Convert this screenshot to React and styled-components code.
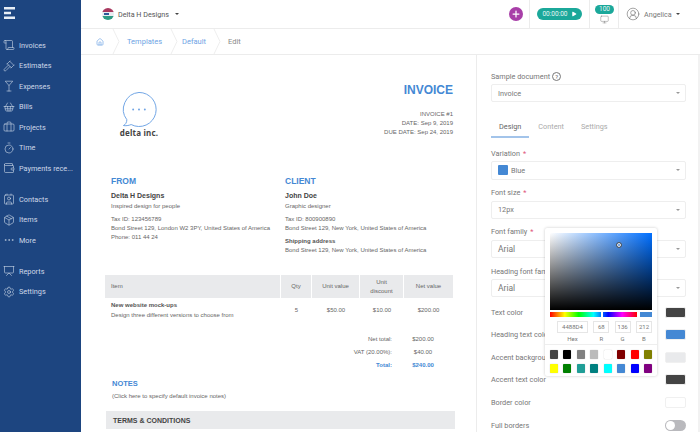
import React from 'react';
import styled, { createGlobalStyle } from 'styled-components';
import {
  Scroll, Gavel, Martini, ShoppingBasket, Briefcase, Timer, Wallet, Contact, Package,
  Ellipsis, Presentation, Settings, House, Plus, Play, Monitor, CircleUserRound,
} from 'lucide-react';

const GlobalStyle = createGlobalStyle`
  html, body { margin: 0; padding: 0; background: #fff; }
  body { font-family: Roboto, "Liberation Sans", sans-serif; overflow: hidden; }
  * { box-sizing: border-box; }
`;

const Shell = styled.div`
  position: relative;
  display: flex;
  width: 700px;
  height: 432px;
  overflow: hidden;
`;

const Sidebar = styled.nav`
  width: 81px;
  flex: none;
  background: #1d4580;
  color: #cdd8e8;
  padding-top: 7px;
`;

const Brand = styled.svg`
  display: block;
  width: 11px;
  height: 12px;
  margin: 0 0 16px 4px;
`;

const NavGroup = styled.div`
  margin-bottom: 10.5px;
`;

const NavItem = styled.div`
  display: flex;
  align-items: center;
  height: 20.5px;
  padding-left: 3px;
  gap: 4px;
  font-size: 7.3px;
  white-space: nowrap;
  svg { width: 12px; height: 12px; flex: none; }
`;

const Main = styled.div`
  flex: 1;
  display: flex;
  flex-direction: column;
  min-width: 0;
`;

const Topbar = styled.header`
  display: flex;
  align-items: stretch;
  height: 29px;
  flex: none;
  border-bottom: 1px solid #ececec;
`;

const OrgSwitch = styled.div`
  flex: 1;
  display: flex;
  align-items: center;
  padding-left: 21px;
  gap: 4px;
  font-size: 7.2px;
  color: #555;
`;

const Caret = styled.span`
  width: 0;
  height: 0;
  margin-left: ${({ $gap }) => $gap || 0}px;
  border-left: 2.5px solid transparent;
  border-right: 2.5px solid transparent;
  border-top: 2.5px solid #444;
`;

const TopCell = styled.div`
  display: flex;
  align-items: center;
  justify-content: center;
  position: relative;
  width: ${({ $w }) => $w}px;
  border-right: 1px solid #ececec;
`;

const PlusButton = styled.div`
  width: 14px;
  height: 14px;
  margin-left: 2px;
  border-radius: 50%;
  background: #a83fa8;
  color: #fff;
  display: flex;
  align-items: center;
  justify-content: center;
`;

const TimerPill = styled.div`
  display: flex;
  align-items: center;
  justify-content: center;
  gap: 3px;
  width: 45px;
  height: 12px;
  border-radius: 6px;
  background: #1ba89a;
  color: #e6f7f5;
  font-size: 6.5px;
`;

const TrayIcon = styled(Monitor)`
  margin-top: 10px;
  color: #777;
`;

const Badge = styled.span`
  position: absolute;
  top: 5px;
  left: 5px;
  width: 19px;
  height: 9px;
  border-radius: 5px;
  background: #1ba89a;
  color: #e6f7f5;
  font-size: 6.5px;
  line-height: 9px;
  text-align: center;
`;

const UserMenu = styled.div`
  width: 81px;
  flex: none;
  display: flex;
  align-items: center;
  padding-left: 7px;
  gap: 4px;
  font-size: 7.2px;
  color: #777;
`;

const Crumbs = styled.div`
  display: flex;
  align-items: center;
  height: 26px;
  flex: none;
  border-bottom: 1px solid #ececec;
  font-size: 7.5px;
`;

const Crumb = styled.span`
  display: flex;
  align-items: center;
  height: 100%;
  flex: none;
  width: ${({ $w }) => $w}px;
  color: ${({ $muted }) => ($muted ? '#888' : '#6ea3e4')};
  padding-left: ${({ $pad }) => $pad}px;
  svg { flex: none; }
`;

const CrumbArrow = styled.svg`
  width: 8px;
  height: 25px;
  margin-left: ${({ $gap }) => $gap}px;
`;

const Content = styled.div`
  flex: 1;
  display: flex;
  min-height: 0;
`;

const Doc = styled.section`
  width: 396px;
  flex: none;
  padding: 27px 0 0 24px;
  border-right: 1px solid #ececec;
  font-family: "Liberation Sans", Arial, sans-serif;
  font-size: 6px;
  color: #666;
`;

const DocHead = styled.div`
  display: flex;
  justify-content: space-between;
  width: 348px;
  height: 94px;
  padding-left: 14px;
`;

const Logo = styled.div`
  display: flex;
  flex-direction: column;
  align-items: center;
  width: 40px;
  padding-top: 9px;
  font-family: "Noto Sans", sans-serif;
  font-weight: 700;
  font-size: 8px;
  letter-spacing: 0.2px;
  line-height: 9px;
  color: #444;
  white-space: nowrap;
  svg { display: block; margin-bottom: 1px; }
`;

const InvoiceMeta = styled.div`
  text-align: right;
  line-height: 9px;
`;

const InvoiceTitle = styled.div`
  font-size: 12px;
  font-weight: 700;
  line-height: 16px;
  color: #4488d4;
  margin-bottom: 12px;
`;

const Parties = styled.div`
  display: grid;
  grid-template-columns: 174px 1fr;
  padding-left: 6px;
  height: 99px;
  line-height: 9px;
`;

const SectionTitle = styled.div`
  font-size: ${({ $size }) => $size || 8.5}px;
  font-weight: 700;
  line-height: 10px;
  color: #4488d4;
  margin-bottom: ${({ $mb }) => $mb ?? 5}px;
`;

const PartyName = styled.div`
  font-size: 7px;
  font-weight: 700;
  line-height: 10px;
  color: #444;
  margin-bottom: 1px;
`;

const Gap = styled.div`
  height: ${({ $h }) => $h}px;
`;

const Strong = styled.div`
  font-weight: 700;
  color: #555;
`;

const TableRow = styled.div`
  display: grid;
  grid-template-columns: 176px 31px 48px 44px 49px;
  align-items: center;
  margin-top: ${({ $mt }) => $mt || 0}px;
`;

const HeadCell = styled.div`
  height: 23px;
  display: flex;
  align-items: center;
  justify-content: ${({ $left }) => ($left ? 'flex-start' : 'center')};
  text-align: center;
  background: #e9eaec;
  border-right: ${({ $last }) => ($last ? 'none' : '1px solid #fff')};
  padding-left: ${({ $left }) => ($left ? 6 : 0)}px;
  line-height: 8.5px;
`;

const BodyCell = styled.div`
  text-align: ${({ $left }) => ($left ? 'left' : 'center')};
  padding-left: ${({ $left }) => ($left ? 6 : 0)}px;
  line-height: 10px;
`;

const Totals = styled.div`
  margin-top: 13px;
  display: grid;
  grid-template-columns: 287px 30px;
  column-gap: 16px;
  line-height: 13px;
`;

const TotalLabel = styled.div`
  text-align: right;
  color: ${({ $accent }) => ($accent ? '#4488d4' : '#666')};
  font-weight: ${({ $accent }) => ($accent ? 700 : 400)};
`;

const TotalValue = styled.div`
  text-align: center;
  color: ${({ $accent }) => ($accent ? '#4488d4' : '#666')};
  font-weight: ${({ $accent }) => ($accent ? 700 : 400)};
`;

const Notes = styled.div`
  padding-left: 7px;
  margin-top: 7px;
`;

const Terms = styled.div`
  width: 349px;
  height: 18px;
  margin: 12px 0 0 1px;
  padding-left: 7px;
  display: flex;
  align-items: center;
  background: #e9eaec;
  color: #444;
  font-size: 7px;
  font-weight: 700;
`;

const Panel = styled.aside`
  flex: 1;
  min-width: 0;
  padding: 16px 0 0 14px;
  border-right: 2px solid #f2f2f2;
  color: #777;
  font-size: 7.3px;
`;

const FieldLabel = styled.div`
  display: flex;
  align-items: center;
  gap: 2px;
  height: 10px;
  margin-bottom: 3px;
  white-space: nowrap;
`;

const Required = styled.span`
  color: #e0557a;
  margin-left: 1px;
`;

const HelpMark = styled.span`
  width: 9px;
  height: 9px;
  border: 1px solid #777;
  border-radius: 50%;
  font-size: 6px;
  line-height: 7px;
  text-align: center;
  color: #666;
`;

const Select = styled.div`
  display: flex;
  align-items: center;
  gap: 3px;
  width: 195px;
  height: 18.3px;
  margin-bottom: ${({ $mb }) => $mb ?? 8}px;
  padding: 0 5px 0 6px;
  border: 1px solid #eee;
  border-radius: 2px;
  color: #777;
  font-size: ${({ $large }) => ($large ? 8.5 : 7.3)}px;
`;

const SelectCaret = styled.span`
  width: 0;
  height: 0;
  margin-left: auto;
  border-left: 2px solid transparent;
  border-right: 2px solid transparent;
  border-top: 2px solid #999;
`;

const ColorDot = styled.span`
  width: 10px;
  height: 10px;
  border-radius: 1px;
  background: #4488d4;
`;

const Tabs = styled.div`
  display: flex;
  gap: 17px;
  height: 21px;
  margin-bottom: 10px;
  padding-left: 8px;
`;

const Tab = styled.div`
  position: relative;
  line-height: 19px;
  color: ${({ $active }) => ($active ? '#666' : '#aaa')};
  &::after {
    content: '';
    display: ${({ $active }) => ($active ? 'block' : 'none')};
    position: absolute;
    left: -8px;
    right: -8px;
    bottom: 0;
    height: 2px;
    background: #a3c4ea;
  }
`;

const ColorRow = styled.div`
  display: flex;
  align-items: center;
  justify-content: space-between;
  width: 195px;
  height: 22.6px;
  white-space: nowrap;
`;

const Swatch = styled.span`
  width: 21px;
  height: 11px;
  border: 1px solid #f0f0f0;
  border-radius: 2px;
  background: ${({ $c }) => $c};
`;

const Toggle = styled.span`
  position: relative;
  width: 21px;
  height: 11px;
  border-radius: 6px;
  background: #b9b9bd;
  &::after {
    content: '';
    position: absolute;
    top: 1px;
    left: 1px;
    width: 9px;
    height: 9px;
    border-radius: 50%;
    background: #fff;
  }
`;

const Picker = styled.div`
  position: absolute;
  left: 545px;
  top: 228px;
  width: 112px;
  height: 148px;
  padding: 5px;
  background: #fff;
  border-radius: 2px;
  box-shadow: 0 0 3px rgba(0, 0, 0, 0.22);
  color: #777;
  font-size: 6px;
`;

const Saturation = styled.div`
  position: relative;
  height: 77px;
  background: linear-gradient(to top, #000, transparent), linear-gradient(to right, #fff, #006fff);
`;

const Thumb = styled.span`
  position: absolute;
  left: 67px;
  top: 10px;
  width: 4px;
  height: 4px;
  border: 1px solid #fff;
  outline: 0.5px solid #555;
  border-radius: 50%;
`;

const HueRow = styled.div`
  display: flex;
  justify-content: space-between;
  margin-top: 2px;
`;

const Hue = styled.div`
  position: relative;
  width: 87px;
  height: 5px;
  background: linear-gradient(to right, #f00, #ff0 17%, #0f0 33%, #0ff 50%, #00f 67%, #f0f 83%, #f00);
`;

const HueThumb = styled.span`
  position: absolute;
  left: 51px;
  top: 0;
  width: 2px;
  height: 5px;
  background: #fff;
`;

const Preview = styled.div`
  width: 12px;
  height: 5px;
  background: #4488d4;
`;

const Inputs = styled.div`
  display: grid;
  grid-template-columns: 31px 16px 16px 16px;
  justify-content: space-between;
  margin: 4px 0 2px;
  padding-left: 7px;
  text-align: center;
`;

const InputBox = styled.div`
  height: 12px;
  border: 1px solid #e6e6e6;
  line-height: 10px;
`;

const InputLabel = styled.div`
  margin-top: 1.5px;
  line-height: 7px;
`;

const Palette = styled.div`
  display: grid;
  grid-template-columns: repeat(8, 8px);
  justify-content: space-between;
  row-gap: 5px;
  margin: 0 -5px;
  padding: 5px 5px 0;
  border-top: 1px solid #eee;
`;

const Chip = styled.span`
  height: 9px;
  border-radius: 1px;
  box-shadow: 0 0 1px rgba(0, 0, 0, 0.35);
  background: ${({ $c }) => $c};
`;

const mainNav = [
  [Scroll, 'Invoices'], [Gavel, 'Estimates'], [Martini, 'Expenses'], [ShoppingBasket, 'Bills'],
  [Briefcase, 'Projects'], [Timer, 'Time'], [Wallet, 'Payments rece...'],
];
const peopleNav = [[Contact, 'Contacts'], [Package, 'Items'], [Ellipsis, 'More']];
const bottomNav = [[Presentation, 'Reports'], [Settings, 'Settings']];

const chips = ['#444', '#000', '#808080', '#bbb', '#fff', '#800000', '#f00', '#808000',
  '#ff0', '#008000', '#1f9e97', '#008080', '#0ff', '#4488d4', '#00f', '#800080'];

const NavList = ({ items }) => (
  <NavGroup>
    {items.map(([Icon, label]) => (
      <NavItem key={label}><Icon strokeWidth={1.2} />{label}</NavItem>
    ))}
  </NavGroup>
);

const Arrow = ({ gap }) => (
  <CrumbArrow $gap={gap} viewBox="0 0 8 25">
    <path d="M1 0l6 12.5L1 25" fill="none" stroke="#eee" />
  </CrumbArrow>
);

const App = () => (
  <Shell>
    <GlobalStyle />
    <Sidebar>
      <Brand viewBox="0 0 11 12">
        <path d="M0 0h11v2.400H0zM0 4.800h7v2.400H0zM0 9.600h11V12H0z" fill="#e8eef6" />
      </Brand>
      <NavList items={mainNav} />
      <NavList items={peopleNav} />
      <NavList items={bottomNav} />
    </Sidebar>
    <Main>
      <Topbar>
        <OrgSwitch>
          <svg width="12" height="12" viewBox="0 0 12 12">
            <clipPath id="org"><circle cx="6" cy="6" r="6" /></clipPath>
            <g clipPath="url(#org)">
              <rect width="12" height="4" fill="#a8385f" />
              <rect y="4" width="12" height="4" fill="#e9edf2" />
              <rect x="2" y="5" width="5" height="2" fill="#2d5a9a" />
              <rect y="8" width="12" height="4" fill="#2f9b85" />
            </g>
          </svg>
          Delta H Designs
          <Caret $gap={2} />
        </OrgSwitch>
        <TopCell $w={30}>
          <PlusButton><Plus size={10} strokeWidth={3} /></PlusButton>
        </TopCell>
        <TopCell $w={60}>
          <TimerPill>00:00:00<Play size={6} fill="#fff" strokeWidth={0} /></TimerPill>
        </TopCell>
        <TopCell $w={29}>
          <TrayIcon size={9} strokeWidth={1.2} />
          <Badge>100</Badge>
        </TopCell>
        <UserMenu>
          <CircleUserRound size={14} color="#666" strokeWidth={1} />
          Angelica
          <Caret />
        </UserMenu>
      </Topbar>
      <Crumbs>
        <Crumb $w={39} $pad={15}>
          <House size={8} />
          <Arrow gap={8} />
        </Crumb>
        <Crumb $w={56} $pad={7}>
          Templates
          <Arrow gap={8} />
        </Crumb>
        <Crumb $w={45} $pad={6}>
          Default
          <Arrow gap={7} />
        </Crumb>
        <Crumb $w={40} $pad={7} $muted>Edit</Crumb>
      </Crumbs>
      <Content>
        <Doc>
          <DocHead>
            <Logo>
              <svg width="38" height="36" viewBox="0 0 38 37">
                <path d="M19 1.500a17.500 17.500 0 1 1-8 33c-2.500 1-6 1.500-8 1 2-1 3.500-3 3.500-6A17.500 17.500 0 0 1 19 1.500z" fill="none" stroke="#6ea3e4" strokeWidth="1" />
                <circle cx="13" cy="19" r="1" fill="#6ea3e4" />
                <circle cx="19" cy="19" r="1" fill="#6ea3e4" />
                <circle cx="25" cy="19" r="1" fill="#6ea3e4" />
              </svg>
              delta inc.
            </Logo>
            <InvoiceMeta>
              <InvoiceTitle>INVOICE</InvoiceTitle>
              <div>INVOICE #1</div>
              <div>DATE: Sep 9, 2019</div>
              <div>DUE DATE: Sep 24, 2019</div>
            </InvoiceMeta>
          </DocHead>
          <Parties>
            <div>
              <SectionTitle>FROM</SectionTitle>
              <PartyName>Delta H Designs</PartyName>
              <div>Inspired design for people</div>
              <Gap $h={4} />
              <div>Tax ID: 123456789</div>
              <div>Bond Street 129, London W2 3PY, United States of America</div>
              <div>Phone: 011 44 24</div>
            </div>
            <div>
              <SectionTitle>CLIENT</SectionTitle>
              <PartyName>John Doe</PartyName>
              <div>Graphic designer</div>
              <Gap $h={4} />
              <div>Tax ID: 800900890</div>
              <div>Bond Street 129, New York, United States of America</div>
              <Gap $h={4} />
              <Strong>Shipping address</Strong>
              <div>Bond Street 129, New York, United States of America</div>
            </div>
          </Parties>
          <TableRow>
            <HeadCell $left>Item</HeadCell>
            <HeadCell>Qty</HeadCell>
            <HeadCell>Unit value</HeadCell>
            <HeadCell>Unit<br />discount</HeadCell>
            <HeadCell $last>Net value</HeadCell>
          </TableRow>
          <TableRow $mt={2}>
            <BodyCell $left>
              <Strong>New website mock-ups</Strong>
              Design three different versions to choose from
            </BodyCell>
            <BodyCell>5</BodyCell>
            <BodyCell>$50.00</BodyCell>
            <BodyCell>$10.00</BodyCell>
            <BodyCell>$200.00</BodyCell>
          </TableRow>
          <Totals>
            <TotalLabel>Net total:</TotalLabel><TotalValue>$200.00</TotalValue>
            <TotalLabel>VAT (20.00%):</TotalLabel><TotalValue>$40.00</TotalValue>
            <TotalLabel $accent>Total:</TotalLabel><TotalValue $accent>$240.00</TotalValue>
          </Totals>
          <Notes>
            <SectionTitle $size={7.5} $mb={4}>NOTES</SectionTitle>
            <div>(Click here to specify default invoice notes)</div>
          </Notes>
          <Terms>TERMS &amp; CONDITIONS</Terms>
        </Doc>
        <Panel>
          <FieldLabel>Sample document <HelpMark>?</HelpMark></FieldLabel>
          <Select $mb={15}>Invoice<SelectCaret /></Select>
          <Tabs>
            <Tab $active>Design</Tab>
            <Tab>Content</Tab>
            <Tab>Settings</Tab>
          </Tabs>
          <FieldLabel>Variation <Required>*</Required></FieldLabel>
          <Select><ColorDot />Blue<SelectCaret /></Select>
          <FieldLabel>Font size <Required>*</Required></FieldLabel>
          <Select>12px<SelectCaret /></Select>
          <FieldLabel>Font family <Required>*</Required></FieldLabel>
          <Select $large>Arial<SelectCaret /></Select>
          <FieldLabel>Heading font family</FieldLabel>
          <Select $large $mb={3.4}>Arial<SelectCaret /></Select>
          <ColorRow>Text color<Swatch $c="#444" /></ColorRow>
          <ColorRow>Heading text color<Swatch $c="#4488d4" /></ColorRow>
          <ColorRow>Accent background<Swatch $c="#e9eaec" /></ColorRow>
          <ColorRow>Accent text color<Swatch $c="#444" /></ColorRow>
          <ColorRow>Border color<Swatch $c="#fff" /></ColorRow>
          <ColorRow>Full borders<Toggle /></ColorRow>
        </Panel>
      </Content>
    </Main>
    <Picker>
      <Saturation><Thumb /></Saturation>
      <HueRow><Hue><HueThumb /></Hue><Preview /></HueRow>
      <Inputs>
        <div><InputBox>4488D4</InputBox><InputLabel>Hex</InputLabel></div>
        <div><InputBox>68</InputBox><InputLabel>R</InputLabel></div>
        <div><InputBox>136</InputBox><InputLabel>G</InputLabel></div>
        <div><InputBox>212</InputBox><InputLabel>B</InputLabel></div>
      </Inputs>
      <Palette>
        {chips.map((c, i) => <Chip key={i} $c={c} />)}
      </Palette>
    </Picker>
  </Shell>
);

export default App;
